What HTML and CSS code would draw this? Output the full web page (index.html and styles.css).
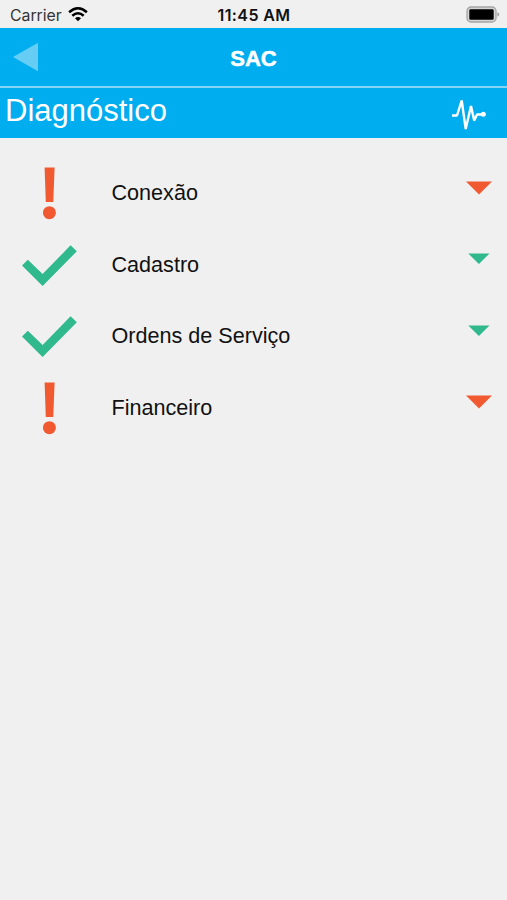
FILE: index.html
```html
<!DOCTYPE html>
<html lang="pt-BR">
<head>
    <meta charset="utf-8">
    <title>SAC</title>
    <link rel="stylesheet" href="styles.css">
</head>
<body>
    <div class="status-bar">
        <div class="carrier">
            <span class="carrier-name">Carrier</span>
            <svg class="wifi" width="20" height="15" viewBox="0 0 20 15">
                <path d="M1.1 5.2Q10-2.6 18.9 5.2M4.3 8.7Q10 3.7 15.7 8.7" fill="none" stroke="#000" stroke-width="2.5"/>
                <path d="M7 11.2Q10 8.8 13 11.2L10 14.3Z"/>
            </svg>
        </div>
        <span class="time">11:45 AM</span>
        <svg class="battery" width="34" height="18" viewBox="0 0 34 18">
            <rect x="1" y="1" width="29" height="15" rx="4" fill="#d5d5d5" stroke="#a5a5a5" stroke-width="1.3"/>
            <rect x="3.3" y="3.3" width="24.4" height="10.4" rx="1.3"/>
            <path d="M31.3 6.3Q33.2 6.9 33.2 8.5T31.3 10.7Z" fill="#a5a5a5"/>
        </svg>
    </div>

    <div class="navbar">
        <svg class="back" width="26" height="30" viewBox="0 0 26 30">
            <path d="M0 15L25 .8V29.2Z" fill="#66cef5"/>
        </svg>
        <h1>SAC</h1>
    </div>

    <div class="section-header">
        <h2>Diagnóstico</h2>
        <svg class="pulse" width="36" height="36" viewBox="0 0 36 36">
            <path d="M1 18.5H6L10.7 3.5L14.7 32L20 9L23.2 23.5L26 17.5H32" fill="none" stroke="#fff" stroke-width="2.4" stroke-linejoin="bevel"/>
            <circle cx="32.3" cy="17.2" r="2.5" fill="#fff"/>
        </svg>
    </div>

    <div class="list">
        <div class="item alert">
            <svg class="icon" viewBox="0 0 56 54">
                <path d="M22.6 1.5H32.6L31.3 36.1H23.8Z"/>
                <circle cx="27.4" cy="46.7" r="6.5"/>
            </svg>
            <span class="label">Conexão</span>
            <svg class="arrow" viewBox="0 0 26 14"><path d="M0 .5H26L13 13.5Z"/></svg>
        </div>
        <div class="item ok">
            <svg class="icon" viewBox="0 0 56 54">
                <path d="M0 27.5L5.8 21.7L20.6 36L48.6 7.3L54.8 13.3L20.6 48Z"/>
            </svg>
            <span class="label">Cadastro</span>
            <svg class="arrow" viewBox="0 0 26 14"><path d="M2.3 1.5H23.5L12.9 12Z"/></svg>
        </div>
        <div class="item ok">
            <svg class="icon" viewBox="0 0 56 54">
                <path d="M0 27.5L5.8 21.7L20.6 36L48.6 7.3L54.8 13.3L20.6 48Z"/>
            </svg>
            <span class="label">Ordens de Serviço</span>
            <svg class="arrow" viewBox="0 0 26 14"><path d="M2.3 1.5H23.5L12.9 12Z"/></svg>
        </div>
        <div class="item alert">
            <svg class="icon" viewBox="0 0 56 54">
                <path d="M22.6 1.5H32.6L31.3 36.1H23.8Z"/>
                <circle cx="27.4" cy="46.7" r="6.5"/>
            </svg>
            <span class="label">Financeiro</span>
            <svg class="arrow" viewBox="0 0 26 14"><path d="M0 .5H26L13 13.5Z"/></svg>
        </div>
    </div>
</body>
</html>
```
FILE: styles.css
```css
* {
    box-sizing: border-box;
    margin: 0;
    padding: 0;
}

body {
    min-height: 100vh;
    font-family: "Liberation Sans", Arial, sans-serif;
    background: #f0f0f0;
    color: #111;
}

svg {
    display: block;
    flex-shrink: 0;
}

.status-bar {
    display: grid;
    grid-template-columns: 1fr auto 1fr;
    align-items: center;
    height: 28px;
    padding: 2px 7px 0 10px;
    font-family: Inter, sans-serif;
}

.carrier {
    display: flex;
    align-items: center;
    gap: 6px;
}

.carrier-name {
    font-size: 15.8px;
    color: #333;
}

.wifi {
    margin-bottom: 1px;
}

.time {
    font-size: 16px;
    font-weight: 600;
    letter-spacing: 0.4px;
    margin-right: 2px;
}

.battery {
    justify-self: end;
    margin-bottom: 1px;
}

.navbar {
    display: grid;
    grid-template-columns: 1fr auto 1fr;
    align-items: center;
    height: 60px;
    padding: 0 13px;
    background: #00adef;
    border-bottom: 2px solid #85d5f5;
}

.navbar h1 {
    font-size: 22px;
    font-weight: 700;
    color: #fff;
    margin-top: 3px;
    -webkit-text-stroke: 0.5px #fff;
}

.section-header {
    display: flex;
    align-items: center;
    justify-content: space-between;
    height: 50px;
    padding: 0 20px 0 5px;
    background: #00adef;
}

.section-header h2 {
    font-size: 31px;
    font-weight: 400;
    color: #fff;
    margin-bottom: 5px;
}

.pulse {
    margin-top: 4px;
}

.list {
    padding-top: 19.5px;
}

.item {
    display: flex;
    align-items: center;
    height: 71.5px;
    padding: 0 15px 0 22px;
}

.alert {
    fill: #f15a31;
}

.ok {
    fill: #2fb98c;
}

.icon {
    width: 56px;
    height: 54px;
}

.label {
    flex: 1;
    margin-left: 33.5px;
    font-size: 21.6px;
}

.arrow {
    width: 26px;
    height: 14px;
    margin-bottom: 11px;
}
```
